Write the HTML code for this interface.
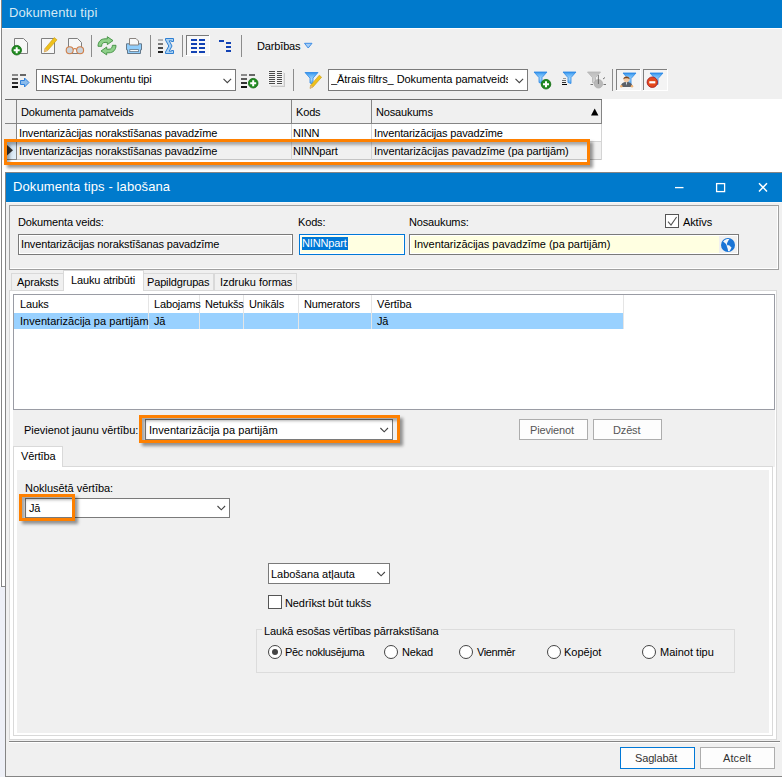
<!DOCTYPE html>
<html><head><meta charset="utf-8"><title>Dokumentu tipi</title>
<style>
html,body{margin:0;padding:0}
body{width:782px;height:777px;overflow:hidden;background:#fff;position:relative;font-family:"Liberation Sans",sans-serif;font-size:11px;color:#000}
div,span,svg{position:absolute;box-sizing:border-box}
.t{white-space:nowrap;line-height:13px;letter-spacing:-0.15px}
.tt{white-space:nowrap;font-size:13px;line-height:16px;color:#d4e9f5}
.blue{background:#007acc}
.g{background:#f0f0f0}
.inp{border:1px solid #7a7a7a;background:#fff}
.btn{border:1px solid #adadad;background:#fdfdfd;text-align:center}
.hl{border:3px solid #fe8000;box-shadow:3px 3px 3px rgba(0,0,0,.4),inset 3px 3px 3px rgba(0,0,0,.3)}
.tab{border:1px solid #d9d9d9;border-bottom:none;background:#f0f0f0}
.tab.a{background:#fff}
.cb{width:14px;height:14px;border:1px solid #555;background:#fff}
.rd{width:14px;height:14px;border:1px solid #444;background:#fff;border-radius:50%}
</style></head><body>
<!-- main window -->
<div style="left:1px;top:0;width:1px;height:587px;background:#858585"></div>
<div style="left:0;top:587px;width:5px;height:190px;background:#eef0f7"></div><div style="left:1px;top:586px;width:4px;height:1px;background:#858585"></div>
<div class="blue" style="left:2px;top:0;width:780px;height:28px"></div>
<span class="tt" style="left:9px;top:5px;letter-spacing:0.12px">Dokumentu tipi</span>
<div class="g" style="left:2px;top:29px;width:780px;height:70px"></div>
<!-- toolbar placeholder -->

<!-- row 2 toolbar -->
<div class="inp" style="left:36px;top:69px;width:200px;height:22px"></div>
<span class="t" style="left:41px;top:73px">INSTAL Dokumentu tipi</span>
<div class="inp" style="left:328px;top:69px;width:200px;height:22px"></div>
<span class="t" style="left:331px;top:73px;width:177px;overflow:hidden;letter-spacing:-0.06px">_Ātrais filtrs_ Dokumenta pamatveids</span>
<span class="t" style="left:257px;top:40px">Darbības</span>
<svg style="left:0;top:0" width="782" height="99" viewBox="0 0 782 99">
<defs>
<linearGradient id="fb" x1="0" y1="0" x2="0" y2="1"><stop offset="0" stop-color="#2f8fea"/><stop offset="0.2" stop-color="#5eb0f6"/><stop offset="0.6" stop-color="#a4d6fc"/><stop offset="1" stop-color="#4aa2f0"/></linearGradient>
<linearGradient id="fg" x1="0" y1="0" x2="0" y2="1"><stop offset="0" stop-color="#bdbdbd"/><stop offset="1" stop-color="#d8d8d8"/></linearGradient>
<g id="plus"><circle r="4.8" fill="#1f8a1f" stroke="#126b12" stroke-width="0.8"/><path d="M-3 0H3M0 -3V3" stroke="#fff" stroke-width="2"/></g>
<path id="fun" d="M0 0H13L8 5.6V11.5L5 10.5V5.6Z"/>
</defs>
<!-- separators row1 -->
<g fill="#8c8c8c" shape-rendering="crispEdges">
<rect x="91" y="35" width="1" height="22"/><rect x="150" y="35" width="1" height="22"/><rect x="182" y="35" width="1" height="22"/><rect x="241" y="35" width="1" height="22"/>
<rect x="293" y="69" width="1" height="22"/><rect x="612" y="69" width="1" height="22"/>
</g>
<!-- new doc -->
<path d="M14.5 38.5H23.5L27.5 42.5V53.5H14.5Z" fill="#f7f7f7" stroke="#7f7f7f"/>
<use href="#plus" x="16.7" y="50.2"/>
<!-- edit doc -->
<path d="M41.5 38.5H54.5V53.5H41.5Z" fill="#f7f7f7" stroke="#7f7f7f"/>
<path d="M54.2 37.6L57 39.8L47.6 50.6L44.3 52L45 48.5Z" fill="#efc11c" stroke="#c89a10" stroke-width="0.6"/>
<path d="M44.3 52L45 48.5L47.6 50.6Z" fill="#e3b48c"/>
<!-- view doc -->
<path d="M68.5 38.5H77.5L81.5 42.5V53.5H68.5Z" fill="#f7f7f7" stroke="#7f7f7f"/>
<g fill="#c9d2da" stroke="#d17f48" stroke-width="1.1"><circle cx="69.7" cy="50.2" r="3.5"/><circle cx="80.1" cy="50.2" r="3.5"/></g>
<path d="M73.2 49.6Q74.9 47.4 76.6 49.6" fill="none" stroke="#d17f48" stroke-width="1.1"/>
<!-- refresh -->
<g fill="#8fd08a" stroke="#3f8f3f" stroke-width="0.9" stroke-linejoin="round">
<path d="M98 46.3C98 41.5 101 38.8 105 38.8H107.3V36.7L113 40.6L107.3 44.6V42.4H105C103 42.4 101.6 43.8 101.6 46.3Z"/>
<path d="M116 45.3C116 50.1 113 52.8 109 52.8H106.7V54.9L101 51L106.7 47V49.2H109C111 49.2 112.4 47.8 112.4 45.3Z"/>
</g>
<!-- printer -->
<path d="M126.5 43.8H141.5V49.8H140.5V53.5H127.5V49.8H126.5Z" fill="#90cdfb" stroke="#64788a" stroke-linejoin="round"/>
<path d="M129.5 45V38.5H136L138.5 41V45Z" fill="#f8f8f8" stroke="#8a8480"/>
<rect x="129.8" y="49.6" width="8.6" height="2" fill="#fafafa" stroke="#64788a" stroke-width="0.8"/>
<!-- sigma -->
<g shape-rendering="crispEdges"><rect x="158" y="39" width="5" height="2" fill="#b5b5b5"/><rect x="158" y="43" width="5" height="2" fill="#7a7a7a"/><rect x="158" y="47" width="5" height="2" fill="#4a4a4a"/><rect x="158" y="51" width="5" height="2" fill="#1c1c1c"/></g>
<path d="M165.5 38.5H173.5V41.5H171.5V40.8H169.2L172 46L169.2 51.2H171.5V50.5H173.5V53.5H165.5V52L168.8 46L165.5 40Z" fill="#a9d1f3" stroke="#2f7fd2" stroke-width="1"/>
<!-- pressed grid button -->
<g shape-rendering="crispEdges"><rect x="186" y="35" width="24" height="21" fill="#f9f9f9"/><rect x="186" y="35" width="24" height="1" fill="#7a7a7a"/><rect x="186" y="35" width="1" height="21" fill="#7a7a7a"/><rect x="186" y="55" width="24" height="1" fill="#fff"/><rect x="209" y="35" width="1" height="21" fill="#fff"/>
<g fill="#1242b4"><rect x="191" y="39" width="6" height="2"/><rect x="199" y="39" width="6" height="2"/><rect x="191" y="43" width="6" height="2"/><rect x="199" y="43" width="6" height="2"/><rect x="191" y="47" width="6" height="2"/><rect x="199" y="47" width="6" height="2"/><rect x="191" y="51" width="6" height="2"/><rect x="199" y="51" width="6" height="2"/>
<rect x="219" y="40" width="5" height="2"/><rect x="226" y="42" width="5" height="2"/><rect x="226" y="46" width="5" height="2"/><rect x="226" y="50" width="5" height="2"/></g></g>
<!-- darbibas arrow -->
<path d="M304.5 43.3H312L308.2 48Z" fill="#a6cdf5" stroke="#3d8ee6" stroke-width="1" stroke-linejoin="round"/>
<!-- row2 icon 1 -->
<g shape-rendering="crispEdges"><rect x="12" y="74" width="6" height="2" fill="#8a8a8a"/><rect x="12" y="78" width="6" height="2" fill="#5c5c5c"/><rect x="12" y="82" width="6" height="2" fill="#333"/><rect x="12" y="86" width="6" height="2" fill="#111"/><rect x="20" y="74" width="6" height="2" fill="#666"/></g>
<path d="M20.5 80.5H24.5V78L29 82.5L24.5 87V84.5H20.5Z" fill="#8bbbeb" stroke="#2f80da" stroke-width="1" stroke-linejoin="round"/>
<!-- row2 list add -->
<g shape-rendering="crispEdges"><rect x="241" y="74" width="6" height="2" fill="#8a8a8a"/><rect x="241" y="78" width="6" height="2" fill="#5c5c5c"/><rect x="241" y="82" width="6" height="2" fill="#333"/><rect x="241" y="86" width="6" height="2" fill="#111"/><rect x="249" y="74" width="6" height="2" fill="#666"/></g>
<use href="#plus" x="253.2" y="83.2"/>
<!-- columns icon -->
<g shape-rendering="crispEdges"><rect x="271" y="73" width="14" height="14" fill="#c9c9c9"/><rect x="270" y="72" width="14" height="14" fill="#e4e4e4"/><rect x="268" y="70" width="15" height="15" fill="#f4f4f4"/>
<g fill="#4d4d4d"><rect x="269" y="71" width="6" height="1"/><rect x="269" y="73" width="6" height="1"/><rect x="269" y="75" width="6" height="1"/><rect x="269" y="77" width="6" height="1"/><rect x="269" y="79" width="6" height="1"/><rect x="269" y="81" width="6" height="1"/><rect x="269" y="83" width="6" height="1"/>
<rect x="277" y="71" width="5" height="1"/><rect x="277" y="73" width="5" height="1"/><rect x="277" y="75" width="5" height="1"/><rect x="277" y="77" width="5" height="1"/><rect x="277" y="79" width="5" height="1"/><rect x="277" y="81" width="5" height="1"/><rect x="277" y="83" width="5" height="1"/></g></g>
<!-- filter edit -->
<use href="#fun" x="305" y="72.5" fill="url(#fb)" stroke="#2a86e4" stroke-width="0.8"/>
<path d="M319.3 75.2L321.6 77.2L313 87L310 88.4L310.7 85.2Z" fill="#efc11c" stroke="#c89a10" stroke-width="0.6"/>
<path d="M310 88.4L310.7 85.2L313 87Z" fill="#e3b48c"/>
<!-- filter add -->
<use href="#fun" x="534" y="72" fill="url(#fb)" stroke="#2a86e4" stroke-width="0.8"/>
<use href="#plus" x="546" y="84.2"/>
<!-- filter small -->
<use href="#fun" x="563" y="72" fill="url(#fb)" stroke="#2a86e4" stroke-width="0.8"/>
<g shape-rendering="crispEdges"><rect x="563" y="78" width="3" height="1" fill="#9a9a9a"/><rect x="562" y="80" width="4" height="1" fill="#666"/><rect x="562" y="82" width="4" height="1" fill="#333"/><rect x="562" y="84" width="5" height="1" fill="#000"/></g>
<!-- filter disabled -->
<use href="#fun" x="587.5" y="72" fill="url(#fg)" stroke="#b4b4b4" stroke-width="0.8"/>
<circle cx="598.4" cy="83.8" r="4.3" fill="#b9b9b9" stroke="#a6a6a6" stroke-width="0.6"/>
<path d="M598.4 75V84M590.5 84.5H593M603.5 84.5H606M603 79L605 77.5" stroke="#555" stroke-width="0.8" fill="none"/>
<!-- pressed 1 -->
<g shape-rendering="crispEdges"><rect x="616" y="69" width="25" height="22" fill="#f4f4f4"/><rect x="616" y="69" width="25" height="1" fill="#808080"/><rect x="616" y="69" width="1" height="22" fill="#808080"/><rect x="616" y="90" width="25" height="1" fill="#fff"/><rect x="640" y="69" width="1" height="22" fill="#fff"/>
<rect x="643" y="69" width="25" height="22" fill="#f4f4f4"/><rect x="643" y="69" width="25" height="1" fill="#808080"/><rect x="643" y="69" width="1" height="22" fill="#808080"/><rect x="643" y="90" width="25" height="1" fill="#fff"/><rect x="667" y="69" width="1" height="22" fill="#fff"/></g>
<use href="#fun" x="623" y="73" fill="url(#fb)" stroke="#2a86e4" stroke-width="0.8"/>
<path d="M620.8 87C620.8 83.5 623 82 626.5 82C630 82 632.5 83.5 632.5 87Z" fill="#5a5f66"/>
<circle cx="626.5" cy="79.3" r="2.9" fill="#f3c9a2"/>
<path d="M623.4 79.3C623.2 75.5 629.8 75.5 629.6 79.3C628.5 77.8 624.5 77.8 623.4 79.3Z" fill="#7a4420"/>
<path d="M625.8 82.3L626.5 85.5L627.2 82.3Z" fill="#e8eef5"/>
<circle cx="621.3" cy="86.3" r="1.2" fill="#f0b070"/><circle cx="632" cy="86.3" r="1.2" fill="#f0b070"/>
<!-- pressed 2 -->
<use href="#fun" x="650" y="73" fill="url(#fb)" stroke="#2a86e4" stroke-width="0.8"/>
<circle cx="652.3" cy="82.2" r="5.2" fill="#e4491b" stroke="#a51d24" stroke-width="0.9"/>
<rect x="649.3" y="81.2" width="6" height="2.2" fill="#fff"/>
<!-- combo arrows -->
<g fill="none" stroke="#444" stroke-width="1.1"><path d="M223.5 78.8L227.3 82.6L231.1 78.8"/><path d="M515.5 78.8L519.3 82.6L523.1 78.8"/></g>
</svg>
<!-- grid -->
<div style="left:5px;top:99px;width:597px;height:1px;background:#6e6e6e"></div>
<div class="g" style="left:2px;top:99px;width:3px;height:61px"></div>
<div class="g" style="left:5px;top:100px;width:596px;height:23px"></div>
<div class="g" style="left:5px;top:123px;width:12px;height:37px"></div><div style="left:5px;top:142px;width:11px;height:17px;background:linear-gradient(135deg,#c4d8ea,#e4f1fb)"></div>
<div class="g" style="left:17px;top:142px;width:584px;height:17px"></div>
<div style="left:5px;top:123px;width:597px;height:1px;background:#858585"></div>
<div style="left:17px;top:141px;width:585px;height:1px;background:#d4d4d4"></div>
<div style="left:17px;top:159px;width:585px;height:1px;background:#c4c4c4"></div><div style="left:5px;top:159px;width:12px;height:1px;background:#858585"></div><div style="left:5px;top:141px;width:12px;height:1px;background:#858585"></div>
<div style="left:16px;top:100px;width:1px;height:60px;background:#858585"></div>
<div style="left:291px;top:100px;width:1px;height:23px;background:#858585"></div>
<div style="left:371px;top:100px;width:1px;height:23px;background:#858585"></div>
<div style="left:601px;top:100px;width:1px;height:23px;background:#858585"></div>
<div style="left:291px;top:124px;width:1px;height:36px;background:#d4d4d4"></div>
<div style="left:371px;top:124px;width:1px;height:36px;background:#d4d4d4"></div>
<div style="left:601px;top:124px;width:1px;height:36px;background:#d4d4d4"></div>
<span class="t" style="left:21px;top:106px">Dokumenta pamatveids</span>
<span class="t" style="left:296px;top:106px">Kods</span>
<span class="t" style="left:376px;top:106px">Nosaukums</span>
<span class="t" style="left:19px;top:127px">Inventarizācijas norakstīšanas pavadzīme</span>
<span class="t" style="left:293px;top:127px">NINN</span>
<span class="t" style="left:374px;top:127px">Inventarizācijas pavadzīme</span>
<span class="t" style="left:19px;top:145px">Inventarizācijas norakstīšanas pavadzīme</span>
<span class="t" style="left:293px;top:145px">NINNpart</span>
<span class="t" style="left:374px;top:145px;letter-spacing:-0.07px">Inventarizācijas pavadzīme (pa partijām)</span>
<svg style="left:591px;top:108px" width="8" height="8" viewBox="0 0 8 8"><path d="M0 7.5L3.7 0.5L7.4 7.5Z" fill="#000"/></svg>
<svg style="left:7px;top:145px" width="7" height="11" viewBox="0 0 7 11"><path d="M0 0L6 5.3L0 10.6Z" fill="#333"/></svg>
<div class="hl" style="left:4px;top:139px;width:586px;height:26px"></div>

<!-- dialog -->
<div style="left:5px;top:172px;width:777px;height:605px;background:#858585"></div>
<div class="blue" style="left:6px;top:173px;width:776px;height:29px"></div>
<span class="tt" style="left:13px;top:179px;letter-spacing:0.1px;color:#fff">Dokumenta tips - labošana</span>
<svg style="left:670px;top:178px" width="104" height="18" viewBox="0 0 104 18"><g stroke="#fff" stroke-width="1.3" fill="none"><path d="M5 9.6H13.5"/><rect x="46.6" y="5.6" width="8" height="8"/><path d="M89 5.2L97 13.4M97 5.2L89 13.4" stroke-width="1.5"/></g></svg>
<div style="left:6px;top:202px;width:776px;height:574px;background:#f0f0f0;border-top:1px solid #f8f8f8"></div>
<div class="g" style="left:6px;top:203px;width:776px;height:87px"></div>
<!-- top panel -->
<div style="left:9px;top:205px;width:770px;height:65px;border:1px solid #a0a0a0;box-shadow:inset -1px -1px 0 #fff"></div>
<span class="t" style="left:18px;top:216px">Dokumenta veids:</span>
<span class="t" style="left:298px;top:216px">Kods:</span>
<span class="t" style="left:409px;top:216px">Nosaukums:</span>
<div class="inp" style="left:18px;top:234px;width:275px;height:21px;background:#f0f0f0;box-shadow:inset 0 0 0 1px #fff"></div>
<span class="t" style="left:21px;top:238px">Inventarizācijas norakstīšanas pavadzīme</span>
<div class="inp" style="left:299px;top:234px;width:106px;height:21px;background:#ffffe1;border-color:#0078d7;box-shadow:inset 0 0 0 1px #fff"></div>
<span class="t" style="left:302px;top:237px;background:#0078d7;color:#fff;line-height:13px;padding:0 1px 0 0">NINNpart</span>
<div class="inp" style="left:409px;top:234px;width:330px;height:21px;background:#ffffe1;box-shadow:inset 0 0 0 1px #fff"></div>
<span class="t" style="left:414px;top:238px;letter-spacing:-0.03px">Inventarizācijas pavadzīme (pa partijām)</span>
<div class="g" style="left:719px;top:236px;width:18px;height:17px"></div>
<div class="cb" style="left:665px;top:214px"></div>
<svg style="left:665px;top:214px" width="14" height="14" viewBox="0 0 14 14"><path d="M3 7.6L6 11L11.6 3" stroke="#555" stroke-width="1.1" fill="none"/></svg>
<span class="t" style="left:683px;top:216px">Aktīvs</span>
<!-- outer tabs -->
<div class="tab" style="left:11px;top:273px;width:53px;height:17px"></div>
<div class="tab" style="left:143px;top:273px;width:71px;height:17px"></div>
<div class="tab" style="left:214px;top:273px;width:83px;height:17px"></div>
<div style="left:9px;top:290px;width:768px;height:450px;border:1px solid #d9d9d9;background:#fff"></div>
<div class="tab a" style="left:63px;top:270px;width:81px;height:21px"></div>
<span class="t" style="left:17px;top:276px">Apraksts</span>
<span class="t" style="left:71px;top:274px">Lauku atribūti</span>
<span class="t" style="left:147px;top:276px">Papildgrupas</span>
<span class="t" style="left:220px;top:276px;letter-spacing:-0.03px">Izdruku formas</span>
<!-- list -->
<div style="left:13px;top:294px;width:762px;height:116px;border:1px solid #9a9ca4;background:#fff"></div>
<div style="left:14px;top:313px;width:609px;height:16px;background:#99d1ff"></div>
<div style="left:148px;top:295px;width:1px;height:34px;background:#e5e5e5"></div>
<div style="left:199px;top:295px;width:1px;height:34px;background:#e5e5e5"></div>
<div style="left:243px;top:295px;width:1px;height:34px;background:#e5e5e5"></div>
<div style="left:298px;top:295px;width:1px;height:34px;background:#e5e5e5"></div>
<div style="left:371px;top:295px;width:1px;height:34px;background:#e5e5e5"></div>
<div style="left:623px;top:295px;width:1px;height:34px;background:#e5e5e5"></div>
<span class="t" style="left:20px;top:298px">Lauks</span>
<span class="t" style="left:154px;top:298px">Labojams</span>
<span class="t" style="left:205px;top:298px">Netukšs</span>
<span class="t" style="left:249px;top:298px">Unikāls</span>
<span class="t" style="left:304px;top:298px">Numerators</span>
<span class="t" style="left:377px;top:298px">Vērtība</span>
<span class="t" style="left:20px;top:315px;letter-spacing:0.03px">Inventarizācija pa partijām</span>
<span class="t" style="left:154px;top:315px">Jā</span>
<span class="t" style="left:377px;top:315px">Jā</span>
<!-- middle panel -->
<div class="g" style="left:13px;top:410px;width:762px;height:57px"></div>
<span class="t" style="left:24px;top:424px;letter-spacing:-0.03px">Pievienot jaunu vērtību:</span>
<div class="inp" style="left:145px;top:419px;width:248px;height:21px"></div>
<span class="t" style="left:149px;top:424px;letter-spacing:0.03px">Inventarizācija pa partijām</span>
<div class="hl" style="left:139px;top:415px;width:261px;height:28px"></div>
<div class="btn" style="left:519px;top:419px;width:69px;height:21px"></div>
<div class="btn" style="left:593px;top:419px;width:69px;height:21px"></div>
<span class="t" style="left:530px;top:424px;color:#555">Pievienot</span>
<span class="t" style="left:613px;top:424px;color:#555">Dzēst</span>
<!-- inner tab -->
<div style="left:13px;top:466px;width:760px;height:270px;border:1px solid #d9d9d9;background:#fff"></div>
<div class="g" style="left:17px;top:470px;width:752px;height:263px"></div>
<div class="tab a" style="left:13px;top:446px;width:50px;height:21px"></div>
<span class="t" style="left:21px;top:450px">Vērtība</span>
<span class="t" style="left:25px;top:482px;letter-spacing:-0.03px">Noklusētā vērtība:</span>
<div class="inp" style="left:25px;top:498px;width:205px;height:20px"></div>
<span class="t" style="left:29px;top:502px">Jā</span>
<div class="hl" style="left:19px;top:494px;width:56px;height:27px"></div>
<div class="inp" style="left:268px;top:563px;width:122px;height:21px"></div>
<span class="t" style="left:271px;top:568px;letter-spacing:-0.03px">Labošana atļauta</span>
<div class="cb" style="left:268px;top:595px"></div>
<span class="t" style="left:285px;top:597px;letter-spacing:-0.1px">Nedrīkst būt tukšs</span>
<div style="left:256px;top:629px;width:479px;height:44px;border:1px solid #dcdcdc"></div>
<span class="t g" style="left:262px;top:625px;padding:0 2px">Laukā esošas vērtības pārrakstīšana</span>
<div class="rd" style="left:268px;top:645px"></div><div style="left:272px;top:649px;width:6px;height:6px;border-radius:50%;background:#444"></div>
<div class="rd" style="left:384px;top:645px"></div>
<div class="rd" style="left:459px;top:645px"></div>
<div class="rd" style="left:547px;top:645px"></div>
<div class="rd" style="left:642px;top:645px"></div>
<span class="t" style="left:285px;top:646px;letter-spacing:-0.3px">Pēc noklusējuma</span>
<span class="t" style="left:402px;top:646px">Nekad</span>
<span class="t" style="left:477px;top:646px;letter-spacing:-0.4px">Vienmēr</span>
<span class="t" style="left:564px;top:646px;letter-spacing:0">Kopējot</span>
<span class="t" style="left:660px;top:646px;letter-spacing:0">Mainot tipu</span>
<!-- bottom -->
<div style="left:9px;top:741px;width:771px;height:1px;background:#858585"></div>
<div style="left:9px;top:742px;width:771px;height:1px;background:#fff"></div>
<div class="g" style="left:9px;top:743px;width:773px;height:30px"></div>
<div class="btn" style="left:620px;top:747px;width:75px;height:22px;border-color:#0078d7"></div>
<div class="btn" style="left:700px;top:747px;width:75px;height:22px"></div>
<span class="t" style="left:635px;top:752px;color:#333">Saglabāt</span>
<span class="t" style="left:723px;top:752px;letter-spacing:0.1px;color:#333">Atcelt</span>
<svg style="left:0;top:0" width="782" height="777" viewBox="0 0 782 777">
<g fill="none" stroke="#444" stroke-width="1.1"><path d="M380.4 428L384.2 431.8L388 428"/><path d="M217.5 506L221.3 509.8L225.1 506"/><path d="M377.3 572L381.1 575.8L384.9 572"/></g>
<circle cx="728" cy="245" r="7" fill="#1a75d6"/>
<g fill="#f4f6f8" transform="translate(728 245)"><path d="M-4.9 -3.5L-3.3 -5.1L-1 -6.1L1.4 -6L0.4 -4.5L-0.4 -3L-1.1 -1.5L-0.7 0.3L1.1 0.2L3.5 2.5L2.7 4.3L1.6 5.9L0.1 6.2L-0.3 3.8L-1 2L-1.4 0.2L-2 -0.9L-2.8 -1.7L-3.7 -2.5Z"/></g>
</svg>
</body></html>
